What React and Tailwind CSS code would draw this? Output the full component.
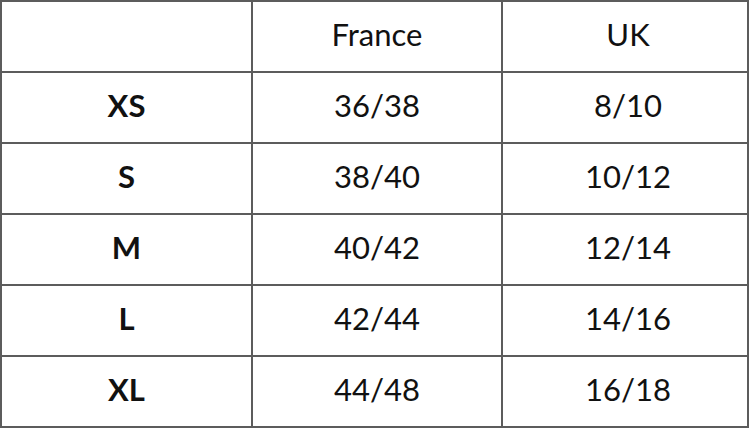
const rows = [
  ['XS', '36/38', '8/10'],
  ['S', '38/40', '10/12'],
  ['M', '40/42', '12/14'],
  ['L', '42/44', '14/16'],
  ['XL', '44/48', '16/18'],
];

function Cell({ children, bold, shift }) {
  return (
    <div
      className={`h-[71px] flex items-center justify-center pb-[4px] border-r-2 border-b-2 border-[#5c5c5c] text-[31px] text-[#111] ${bold ? 'font-bold' : 'font-normal'} ${shift ? 'pl-[6px]' : ''}`}
    >
      {children}
    </div>
  );
}

export default function App() {
  return (
    <div className="w-[750px] h-[428px] bg-white font-['Lato',sans-serif]">
      <div className="grid grid-cols-[251px_250px_246px] border-l-2 border-t-2 border-[#5c5c5c] w-[749px]">
        <Cell />
        <Cell>France</Cell>
        <Cell shift>UK</Cell>
        {rows.map(([size, fr, uk]) => (
          <div key={size} className="contents">
            <Cell bold>{size}</Cell>
            <Cell>{fr}</Cell>
            <Cell shift>{uk}</Cell>
          </div>
        ))}
      </div>
    </div>
  );
}
